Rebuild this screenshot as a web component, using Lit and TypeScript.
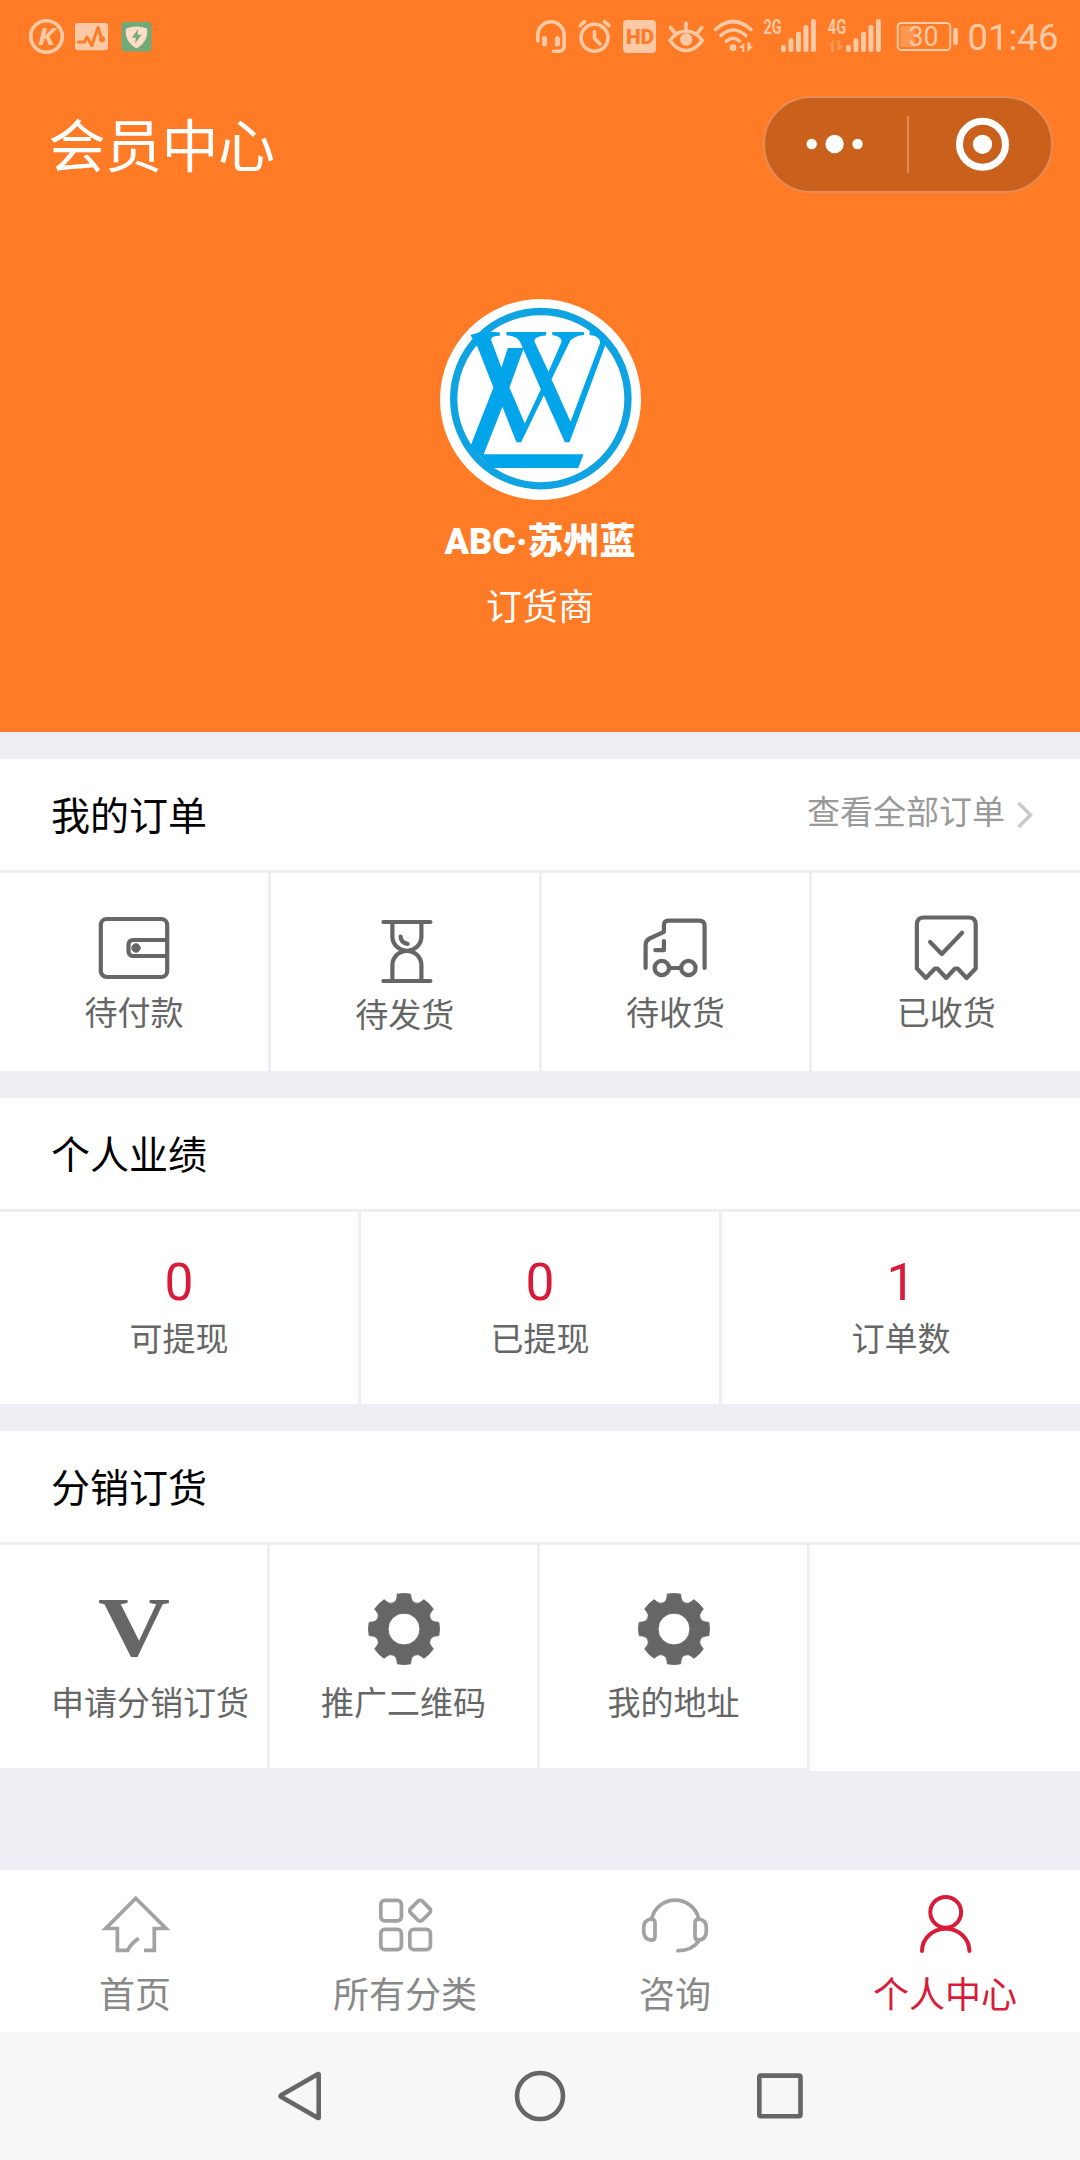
import { LitElement, html, svg, css, nothing, type TemplateResult, type SVGTemplateResult } from "lit";
import { customElement, property } from "lit/decorators.js";

/** Outline of an eight-toothed gear centred on the origin. */
function gearPath(): string {
  const at = (x: number, y: number, deg: number) => {
    const a = (deg * Math.PI) / 180;
    const px = x * Math.cos(a) - y * Math.sin(a);
    const py = x * Math.sin(a) + y * Math.cos(a);
    return `${px.toFixed(2)} ${py.toFixed(2)}`;
  };
  let d = `M${at(-6.6, -34.8, 0)}`;
  for (let k = 0; k < 8; k++) {
    const a = k * 45;
    d += `A35.5 35.5 0 0 1 ${at(6.6, -34.8, a)}L${at(7, -31.5, a)}`;
    d += `A6.2 6.2 0 0 0 ${at(-7, -31.5, a + 45)}L${at(-6.6, -34.8, a + 45)}`;
  }
  return d + "ZM0 -16A16 16 0 1 0 0 16A16 16 0 1 0 0 -16Z";
}

const gear = svg`<path class="solid" transform="translate(36 36)" fill-rule="evenodd" d=${gearPath()} />`;

const icons: Record<string, SVGTemplateResult> = {
  wallet: svg`
    <rect x="2.8" y="7" width="66.4" height="58" rx="6" />
    <path d="M69 28H35.5q-5 0-5 5v6q0 5 5 5H69" />
    <circle class="solid" cx="38" cy="36" r="4.2" />`,
  hourglass: svg`
    <path d="M14.4 10H61.4M14.4 69H61.4M23.4 10V24.5a14.5 14.3 0 0 0 29 0V10M23.4 69V53.2a14.5 14.3 0 0 1 29 0V69M31.6 24.5q.4 6.6 7 7.3" />`,
  truck: svg`
    <path d="M6.6 56V33q0-4.5 4-6.5L24.9 19.8V13q0-4.4 4.4-4.4H60.2q5.4 0 5.4 5.4V56M24.9 29V38.2H16.3M30 56H42" />
    <circle cx="22.8" cy="56" r="7.2" />
    <circle cx="49.4" cy="56" r="7.2" />`,
  receipt: svg`
    <path d="M6.9 56.5V12.5q0-7 7-7H58.7q7 0 7 7V56.5L56.6 66 47.6 56.5H45L36.2 66 27.4 56.5H25L15.9 66ZM20.1 30 31.8 42 52.1 20.7" />`,
  vip: svg`<text class="vip" x="0" y="63.4" textLength="72" lengthAdjust="spacingAndGlyphs">V</text>`,
  gear,
  home: svg`
    <path class="sharp" d="M39.8 48.4Q32 53.5 28.8 60.3H18.4V38.5H6.7L36.7 8.3 67 38.5H55.3V60.3H45" />`,
  grid: svg`
    <rect x="11.8" y="10.4" width="20.6" height="20.4" rx="4" />
    <rect x="11.8" y="39.3" width="20.6" height="20.4" rx="4" />
    <rect x="40.8" y="39.3" width="20.6" height="20.4" rx="4" />
    <rect x="42.9" y="12.4" width="16.5" height="16.5" rx="3" transform="rotate(45 51.1 20.7)" />`,
  headset: svg`
    <path d="M12.9 27.7A24.2 24.2 0 0 1 59.5 27.7M16 33q0-4-4-4-7.3 1-7.3 9v3q0 8 7.3 9.2 4 0 4-4ZM56 33q0-4 4-4 7.3 1 7.3 9v3q0 8-7.3 9.2-4 0-4-4ZM59.4 51.7Q52 61 39 60.7" />`,
  user: svg`
    <circle cx="36.7" cy="22.3" r="15.4" />
    <path d="M13 61A23.7 22.3 0 0 1 60.4 61" />`,
};

@customElement("ui-icon")
export class UiIcon extends LitElement {
  @property() name = "";
  static styles = css`
    :host { display: inline-block; width: 72px; height: 72px; }
    svg { display: block; width: 72px; height: 72px; overflow: visible; fill: none; stroke: currentColor; stroke-width: var(--stroke, 4.2); stroke-linecap: round; stroke-linejoin: round; }
    .solid { fill: currentColor; stroke-width: 1; }
    .sharp { stroke-linecap: butt; stroke-linejoin: miter; }
    .vip { font: 700 85px "Liberation Serif", serif; fill: currentColor; stroke: none; }
  `;
  render() {
    return html`<svg viewBox="0 0 72 72">${icons[this.name]}</svg>`;
  }
}

@customElement("status-bar")
export class StatusBar extends LitElement {
  static styles = css`
    :host { display: flex; justify-content: space-between; height: 72px; padding: 0 22.5px 0 24px; color: #ffc9a6; font-family: Roboto, sans-serif; }
    .group { display: flex; }
    svg { display: block; height: 72px; flex: none; fill: none; stroke: currentColor; stroke-linecap: round; stroke-linejoin: round; stroke-width: 3.6; }
    .fill { fill: currentColor; stroke: none; }
    .cut { fill: #ff7b25; stroke: none; }
    .cutline { stroke: #ff7b25; stroke-width: 3; }
    .k { font: italic 700 23px "Open Sans", sans-serif; }
    .hd { font: 900 20px Roboto, sans-serif; }
    .net { font: 700 20.5px Roboto, sans-serif; }
    .pct { font: 400 27px Roboto, sans-serif; }
    .thin { stroke-width: 2; }
    .faint { opacity: 0.35; }
    .green { fill: #6fa97c; stroke: none; }
    .shield { fill: #ffdcc6; stroke: none; }
    .time { font-size: 36.5px; line-height: 75px; width: 90px; white-space: nowrap; }
  `;

  private bars(x: number) {
    return [45, 38.3, 31.8, 25, 19].map(
      (top, i) => svg`<rect class="fill" x=${x + i * 7.5} y=${top} width="4.9" height=${52 - top} rx="2" />`
    );
  }

  render() {
    return html`
      <div class="group">
        <svg width="44" viewBox="24 0 44 72">
          <circle cx="46.5" cy="36.5" r="15.8" />
          <text class="fill k" x="38" y="44.8" textLength="17" lengthAdjust="spacingAndGlyphs">K</text>
        </svg>
        <svg width="46" viewBox="68 0 46 72">
          <rect class="fill" x="75" y="23" width="33" height="27.3" rx="3" />
          <path class="cutline" d="M78.5 42H84.5L87 37 91.8 45.5 98 27.5 101.5 38.5" />
          <circle class="cut" cx="102" cy="39.3" r="3" />
        </svg>
        <svg width="46" viewBox="114 0 46 72">
          <rect class="green" x="121.5" y="22" width="30" height="29.5" rx="4" />
          <path class="shield" d="M126 28.5Q136.5 24.5 147 28.5 149 41 136.5 48.5 124 41 126 28.5Z" />
          <path class="green" d="M138.2 29 131.8 37.7H136L135 43.5 141.6 34.8H137.5Z" />
        </svg>
      </div>
      <div class="group">
        <svg width="38" viewBox="534 0 38 72">
          <path d="M536.8 41V35a13.2 13.2 0 0 1 26.4 0V46a5 5 0 0 1-5 5.3H552.5" />
          <path stroke-width="5" d="M543.6 38.5V44M556.4 38.5V44" />
        </svg>
        <svg width="44" viewBox="572 0 44 72">
          <circle cx="593.5" cy="37.7" r="13.5" />
          <path d="M593.5 31.5V38.5L599 44M579.3 25.5 583.6 21.7M603.4 21.7 608 25.5" />
        </svg>
        <svg width="45" viewBox="616 0 45 72">
          <rect class="fill" x="622" y="20" width="33" height="33" rx="4" />
          <text class="cut hd" x="625" y="44" textLength="28" lengthAdjust="spacingAndGlyphs">HD</text>
        </svg>
        <svg width="47" viewBox="661 0 47 72">
          <path d="M669 40.5Q676 31 685 31T701.5 40.5Q694 50.5 685 50.5T669 40.5ZM685 23V30M669.5 27.5 674 33M700.8 27.5 696.5 33" />
          <circle class="fill" cx="685.2" cy="39.5" r="6.2" />
        </svg>
        <svg width="50" viewBox="708 0 50 72">
          <path d="M714.5 29.5Q732 13.5 750 29.5M719.8 35.5Q732 24.5 744.8 35.5M725.5 41Q732 35.5 738.5 41" />
          <circle class="fill" cx="732" cy="47.7" r="3.4" />
          <path class="fill" d="M738 48 743.3 42.5V52H741V48ZM746.5 42.5V52L752.3 46.5H749.5V42.5Z" />
        </svg>
        <svg width="63" viewBox="758 0 63 72">
          <text class="fill net" x="762.5" y="34" textLength="18" lengthAdjust="spacingAndGlyphs">2G</text>
          ${this.bars(780)}
        </svg>
        <svg width="67" viewBox="821 0 67 72">
          <text class="fill net" x="826.8" y="34" textLength="18.5" lengthAdjust="spacingAndGlyphs">4G</text>
          <path class="fill faint" d="M827 45 833 40V52H830V45ZM836.5 40V52L843 46H839.5V40Z" />
          ${this.bars(845)}
        </svg>
        <svg width="79" viewBox="888 0 79 72">
          <rect class="thin" x="896.8" y="23" width="52.4" height="27" rx="3.5" />
          <rect class="fill faint" x="899.5" y="26" width="14.5" height="21" />
          <rect class="fill" x="952.3" y="28" width="4.6" height="17" rx="2" />
          <text class="fill pct" x="907.5" y="46" textLength="30" lengthAdjust="spacingAndGlyphs">30</text>
        </svg>
        <div class="time">01:46</div>
      </div>
    `;
  }
}

@customElement("profile-header")
export class ProfileHeader extends LitElement {
  static styles = css`
    :host { display: block; height: 732px; background: #ff7b25; color: #fff; font-family: "Noto Sans CJK SC", sans-serif; }
    .bar { display: flex; justify-content: space-between; align-items: center; height: 144px; padding: 0 27px 0 48.5px; }
    .title { font-size: 57px; line-height: 84px; letter-spacing: -0.5px; padding-bottom: 5px; }
    .capsule { display: flex; align-items: center; box-sizing: border-box; width: 290px; height: 97px; border: 2px solid #e58d58; border-radius: 49px; background: #c9611d; }
    .half { flex: 1; display: flex; justify-content: center; }
    .divider { width: 2px; height: 57px; background: #e28a52; }
    .capsule svg { display: block; }
    .profile { display: flex; flex-direction: column; align-items: center; padding-top: 83px; }
    .avatar { display: block; width: 201px; height: 201px; }
    .name { margin-top: 15px; font: 900 36px/54px Roboto, "Noto Sans CJK SC", sans-serif; }
    .role { margin-top: 8px; font-size: 36px; line-height: 54px; }
  `;
  render() {
    return html`
      <status-bar></status-bar>
      <div class="bar">
        <div class="title">会员中心</div>
        <div class="capsule">
          <div class="half">
            <svg width="60" height="60" fill="#fff">
              <circle cx="5.7" cy="30" r="5.2" /><circle cx="28.6" cy="30" r="9.2" /><circle cx="51.5" cy="30" r="5.2" />
            </svg>
          </div>
          <div class="divider"></div>
          <div class="half">
            <svg width="60" height="60">
              <circle cx="32.5" cy="30.3" r="23" fill="none" stroke="#fff" stroke-width="7" />
              <circle cx="32.5" cy="30.3" r="9.6" fill="#fff" />
            </svg>
          </div>
        </div>
      </div>
      <div class="profile">
        <svg class="avatar" viewBox="59 57 602 602">
          <circle cx="360" cy="358" r="301" fill="#fff" />
          <circle cx="361" cy="355.5" r="261" fill="none" stroke="#10a3e2" stroke-width="22" />
          <g fill="#03a5ea">
            <path d="M150 165Q190 150 238 157V167Q210 168 212 180L243 262 262 204H310L267 322 313 430 361 327 300 188Q290 166 258 166V156H377V166Q340 168 342 184L384 275 422 188Q428 170 395 165V156H490V165Q455 168 446 188L393 297 450 425 538 190Q542 168 507 165V154H540L556 190 447 486H433L370 345 302 486H288L246 380 190 522H489L473 563H215L150 498 219 322 172 202Z" />
          </g>
        </svg>
        <div class="name">ABC·苏州蓝</div>
        <div class="role">订货商</div>
      </div>
    `;
  }
}

interface Entry {
  icon?: string;
  value?: string;
  label: string;
}

@customElement("panel-section")
export class PanelSection extends LitElement {
  @property() heading = "";
  @property() more = "";
  @property() variant: "orders" | "stats" | "tools" = "orders";
  @property({ attribute: false }) entries: Entry[] = [];

  static styles = css`
    :host { display: block; font-family: "Noto Sans CJK SC", sans-serif; background: #efeef4; }
    .head { display: flex; justify-content: space-between; height: 111px; margin-bottom: 3px; padding: 0 47px 0 51px; background: #fff; }
    .heading { font-size: 39px; line-height: 109px; color: #000; }
    .more { display: flex; font-size: 33px; line-height: 103px; color: #999; }
    .more svg { margin: 42px 0 0 12px; }
    .cells { display: grid; }
    .cell { box-sizing: border-box; background: #fff; color: #666; text-align: center; font-size: 33px; white-space: nowrap; }
    ui-icon { display: block; margin: 0 auto; }
    .label { line-height: 48px; }
    .orders { grid-template-columns: repeat(4, 1fr); gap: 3px; }
    .orders .cell { height: 198px; padding-top: 39px; }
    .orders .label { margin-top: 3px; }
    .orders .cell:nth-child(2) .label { margin-top: 5px; }
    .stats { grid-template-columns: repeat(3, 1fr); gap: 3px; }
    .stats .cell { height: 192px; padding-top: 41px; }
    .stats .label { margin-top: 0; }
    .value { font: 400 51.5px/60px Roboto, sans-serif; color: #d91b3a; }
    .tools { grid-template-columns: repeat(4, minmax(0, 1fr)); background: #fff; }
    .tools .cell { height: 226px; padding: 48px 51px 0; border-right: 3px solid #efeef4; border-bottom: 3px solid #efeef4; }
    .tools ui-icon { margin-left: calc(50% - 36px); }
    .tools .label { margin-top: 12px; }
  `;

  render(): TemplateResult {
    return html`
      <div class="head">
        <div class="heading">${this.heading}</div>
        ${this.more
          ? html`<div class="more">
              ${this.more}
              <svg width="16" height="28" fill="none" stroke="#c7c7cc" stroke-width="3.4">
                <path d="M1.5 2 13.5 14 1.5 26" />
              </svg>
            </div>`
          : nothing}
      </div>
      <div class="cells ${this.variant}">
        ${this.entries.map(
          (e) => html`<div class="cell">
            ${e.icon ? html`<ui-icon name=${e.icon}></ui-icon>` : html`<div class="value">${e.value}</div>`}
            <div class="label">${e.label}</div>
          </div>`
        )}
      </div>
    `;
  }
}

@customElement("tab-bar")
export class TabBar extends LitElement {
  static styles = css`
    :host { display: grid; grid-template-columns: repeat(4, 1fr); height: 162px; background: #fff; font-family: "Noto Sans CJK SC", sans-serif; }
    .tab { padding-top: 20px; text-align: center; font-size: 36px; line-height: 54px; color: #888; }
    ui-icon { display: block; margin: 0 auto 3px; color: #a2a2a2; --stroke: 3.7; }
    .active, .active ui-icon { color: #d91b3a; }
    .active ui-icon { --stroke: 4; }
  `;
  render() {
    const tabs: Entry[] = [
      { icon: "home", label: "首页" },
      { icon: "grid", label: "所有分类" },
      { icon: "headset", label: "咨询" },
      { icon: "user", label: "个人中心" },
    ];
    return tabs.map(
      (t) => html`<div class="tab ${t.icon === "user" ? "active" : ""}">
        <ui-icon name=${t.icon!}></ui-icon>${t.label}
      </div>`
    );
  }
}

@customElement("app-root")
export class AppRoot extends LitElement {
  static styles = css`
    :host { display: flex; flex-direction: column; width: 1080px; height: 2160px; overflow: hidden; background: #efeef4; }
    main { display: flex; flex-direction: column; gap: 27px; flex: 1; padding-top: 27px; }
    .system { display: flex; justify-content: center; align-items: center; gap: 180px; height: 128px; background: #f7f7f7; }
    .system svg { display: block; fill: none; stroke: #666; stroke-width: 4.6; stroke-linejoin: round; }
  `;

  private orders: Entry[] = [
    { icon: "wallet", label: "待付款" },
    { icon: "hourglass", label: "待发货" },
    { icon: "truck", label: "待收货" },
    { icon: "receipt", label: "已收货" },
  ];
  private stats: Entry[] = [
    { value: "0", label: "可提现" },
    { value: "0", label: "已提现" },
    { value: "1", label: "订单数" },
  ];
  private tools: Entry[] = [
    { icon: "vip", label: "申请分销订货" },
    { icon: "gear", label: "推广二维码" },
    { icon: "gear", label: "我的地址" },
  ];

  render() {
    return html`
      <profile-header></profile-header>
      <main>
        <panel-section heading="我的订单" more="查看全部订单" .entries=${this.orders}></panel-section>
        <panel-section heading="个人业绩" variant="stats" .entries=${this.stats}></panel-section>
        <panel-section heading="分销订货" variant="tools" .entries=${this.tools}></panel-section>
      </main>
      <tab-bar></tab-bar>
      <div class="system">
        <svg width="60" height="60"><path d="M48.7 8.3V51.7q0 .5-.6.3L11 30.8q-1-.8 0-1.6L48.1 8q.6-.2.6.3Z" /></svg>
        <svg width="60" height="60"><circle cx="30" cy="30" r="23" /></svg>
        <svg width="60" height="60"><rect x="9.3" y="9.6" width="41.2" height="40.6" rx="1.5" /></svg>
      </div>
    `;
  }
}
